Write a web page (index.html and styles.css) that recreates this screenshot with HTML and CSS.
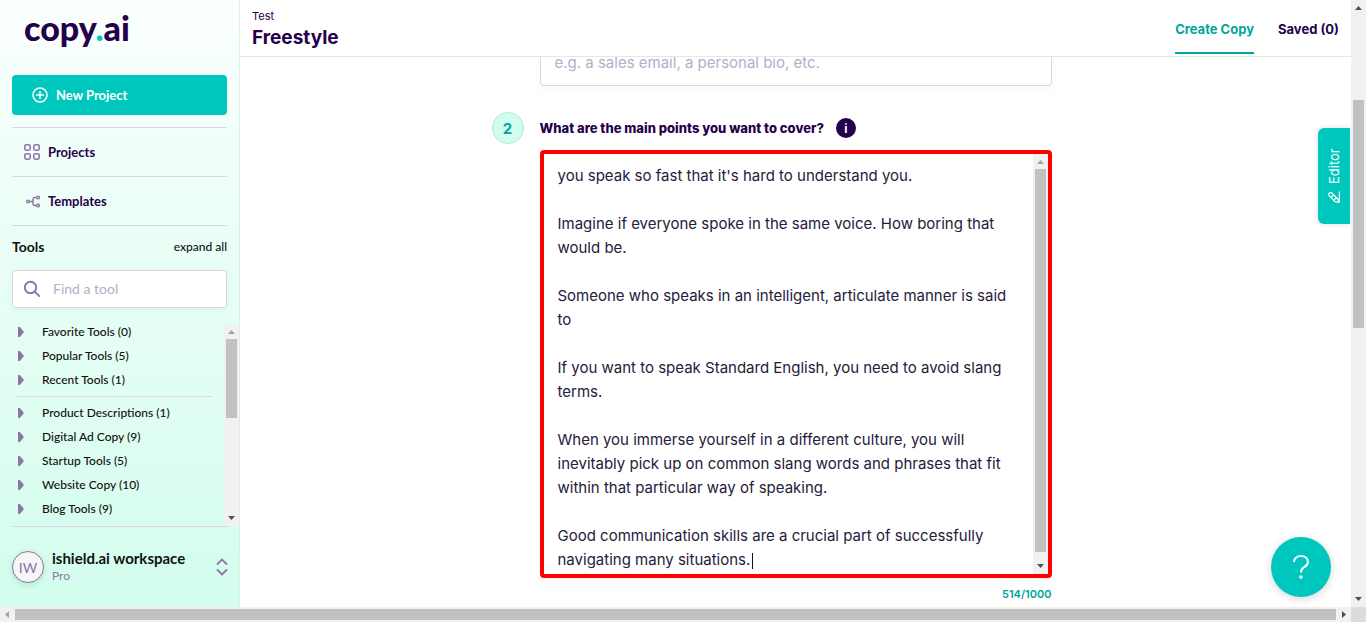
FILE: index.html
```html
<!DOCTYPE html>
<html lang="en">
<head>
<meta charset="utf-8">
<title>Freestyle – copy.ai</title>
<link rel="stylesheet" href="styles.css">
</head>
<body>
<div class="app">
  <aside class="sidebar">
    <a class="logo" href="#">copy<span class="logo-dot">.</span>ai</a>
    <button class="new-project" type="button">
      <svg width="16" height="16" viewBox="0 0 16 16" fill="none" stroke="currentColor" stroke-width="1.5" stroke-linecap="round"><circle cx="8" cy="8" r="7"/><path d="M8 4.6v6.8M4.6 8h6.8"/></svg>
      New Project
    </button>
    <nav class="nav">
      <a class="nav-link" href="#">
        <svg width="16" height="16" viewBox="0 0 16 16" fill="none" stroke="currentColor" stroke-width="1.6"><rect x=".8" y=".8" width="5.4" height="5.4" rx="1.6"/><rect x="9.8" y=".8" width="5.4" height="5.4" rx="1.6"/><rect x=".8" y="9.8" width="5.4" height="5.4" rx="1.6"/><rect x="9.8" y="9.8" width="5.4" height="5.4" rx="1.6"/></svg>
        Projects
      </a>
      <a class="nav-link" href="#">
        <svg width="16" height="16" viewBox="0 0 16 16" fill="none" stroke="currentColor" stroke-width="1.4"><circle cx="4" cy="8.5" r="1.4"/><circle cx="14" cy="4.5" r="1.4"/><circle cx="14" cy="12.5" r="1.4"/><path d="M5.4 8.5H9M12.6 4.5h-1.800A1.800 1.800 0 0 0 9 6.300v4.400a1.800 1.800 0 0 0 1.800 1.800h1.800"/></svg>
        Templates
      </a>
    </nav>
    <div class="tools-head">
      <h2 class="tools-title">Tools</h2>
      <button class="expand" type="button">expand all</button>
    </div>
    <label class="search">
      <svg width="18" height="18" viewBox="0 0 18 18" fill="none" stroke="currentColor" stroke-width="1.900"><circle cx="7.500" cy="7.500" r="5.700"/><path d="M11.700 11.700l5 5"/></svg>
      <input class="search-input" type="text" placeholder="Find a tool" aria-label="Find a tool">
    </label>
    <div class="tools">
      <div class="tool-list">
        <button class="tool" type="button"><i class="caret"></i>Favorite Tools (0)</button>
        <button class="tool" type="button"><i class="caret"></i>Popular Tools (5)</button>
        <button class="tool" type="button"><i class="caret"></i>Recent Tools (1)</button>
        <hr class="tool-rule">
        <button class="tool" type="button"><i class="caret"></i>Product Descriptions (1)</button>
        <button class="tool" type="button"><i class="caret"></i>Digital Ad Copy (9)</button>
        <button class="tool" type="button"><i class="caret"></i>Startup Tools (5)</button>
        <button class="tool" type="button"><i class="caret"></i>Website Copy (10)</button>
        <button class="tool" type="button"><i class="caret"></i>Blog Tools (9)</button>
      </div>
      <div class="bar">
        <svg class="arrow dim" viewBox="0 0 15 15"><path d="M4 10h7L7.500 6z"/></svg>
        <div class="track tools-track"><div class="thumb"></div></div>
        <svg class="arrow" viewBox="0 0 15 15"><path d="M4 5h7L7.500 9z"/></svg>
      </div>
    </div>
    <button class="workspace" type="button">
      <span class="avatar">IW</span>
      <span class="workspace-text"><b class="workspace-name">ishield.ai workspace</b><span class="plan">Pro</span></span>
      <svg width="12" height="18" viewBox="0 0 12 18" fill="none" stroke="currentColor" stroke-width="1.800"><path d="M1 6.500l5-5 5 5M1 11.500l5 5 5-5"/></svg>
    </button>
  </aside>

  <main class="main">
    <header class="header">
      <div>
        <div class="project">Test</div>
        <h1 class="title">Freestyle</h1>
      </div>
      <nav class="tabs">
        <a class="tab active" href="#">Create Copy</a>
        <a class="tab" href="#">Saved (0)</a>
      </nav>
    </header>
    <div class="content">
      <form class="form">
        <input class="topic" type="text" placeholder="e.g. a sales email, a personal bio, etc." aria-label="What are you looking to create?">
        <span class="step">2</span>
        <div class="question">
          <label for="points">What are the main points you want to cover?</label>
          <span class="info">i</span>
        </div>
        <div class="points-box">
          <textarea class="points" id="points">you speak so fast that it's hard to understand you.

Imagine if everyone spoke in the same voice. How boring that would be.

Someone who speaks in an intelligent, articulate manner is said to

If you want to speak Standard English, you need to avoid slang terms.

When you immerse yourself in a different culture, you will inevitably pick up on common slang words and phrases that fit within that particular way of speaking.

Good communication skills are a crucial part of successfully navigating many situations.</textarea>
          <div class="bar">
            <svg class="arrow dim" viewBox="0 0 15 15"><path d="M4 10h7L7.500 6z"/></svg>
            <div class="track points-track"><div class="thumb"></div></div>
            <svg class="arrow" viewBox="0 0 15 15"><path d="M4 5h7L7.500 9z"/></svg>
          </div>
          <i class="text-cursor"></i>
        </div>
        <div class="counter">514/1000</div>
      </form>
    </div>
    <button class="editor" type="button">
      <svg width="12" height="12" viewBox="0 0 12 12" fill="none" stroke="currentColor" stroke-width="1.200"><path d="M1.200 7.200L7.200 1.300a1.900 1.900 0 0 1 2.700 2.700L4 9.900l-3.400.7zM2.800 5.700l2.700 2.700M5.500 3l2.700 2.700M1 11.400h10.500"/></svg>
      Editor
    </button>
    <button class="help" type="button" aria-label="Help">
      <svg width="20" height="28" viewBox="0 0 20 28" fill="none" stroke="currentColor" stroke-width="2"><path d="M3 9C3 5.400 5.800 3 9.900 3s7 2.300 7 5.900c0 3-1.900 4.200-4 5.500-2 1.300-2.900 2.400-2.900 5.200"/><circle cx="9.900" cy="24" r="1.800" fill="currentColor" stroke="none"/></svg>
    </button>
  </main>

  <div class="bar page-bar">
    <svg class="arrow" viewBox="0 0 15 15"><path d="M4 10h7L7.500 6z"/></svg>
    <div class="track page-track"><div class="thumb"></div></div>
    <svg class="arrow" viewBox="0 0 15 15"><path d="M4 5h7L7.500 9z"/></svg>
  </div>
  <div class="bar across">
    <svg class="arrow dim" viewBox="0 0 15 15"><path d="M9 4v7L5 7.500z"/></svg>
    <div class="track"><div class="thumb"></div></div>
    <svg class="arrow" viewBox="0 0 15 15"><path d="M6 4v7l4-3.500z"/></svg>
  </div>
  <div class="corner"></div>
</div>
</body>
</html>
```
FILE: styles.css
```css
:root {
  --teal: #00c7be;
  --teal-dark: #00a69c;
  --ink: #25004b;
  --mauve: #8d74a5;
  --line: #dfd3e9;
}
* { box-sizing: border-box; }
body { margin: 0; font-family: Inter, sans-serif; color: var(--ink); background: #fff; }
button { border: 0; padding: 0; background: none; color: inherit; font: inherit; text-align: left; cursor: pointer; }
a { color: inherit; text-decoration: none; }
h1, h2 { margin: 0; }
svg { flex: none; }

.app {
  display: grid;
  grid-template: minmax(0, 1fr) 15px / 240px minmax(0, 1fr) 15px;
  height: 100vh;
  overflow: hidden;
}

/* Sidebar */
.sidebar {
  display: flex;
  flex-direction: column;
  min-height: 0;
  padding-left: 12px;
  border-right: 1px solid #d8f0e8;
  background: linear-gradient(#fbfffd, #d2fdec);
  font-family: Lato, sans-serif;
}
.logo {
  height: 75px;
  padding: 7px 0 0 12px;
  font-size: 34px;
  line-height: 42px;
  font-weight: 900;
}
.logo-dot { color: var(--teal); }
.new-project {
  display: flex;
  align-items: center;
  gap: 8px;
  height: 40px;
  margin: 0 12px 12px 0;
  padding-left: 20px;
  border-radius: 4px;
  background: var(--teal);
  color: #fff;
  font-size: 13px;
  font-weight: 700;
  flex: none;
}
.nav { margin-right: 12px; }
.nav-link {
  display: flex;
  align-items: center;
  gap: 8px;
  height: 49px;
  padding-left: 12px;
  border-top: 1px solid var(--line);
  font-size: 13px;
  font-weight: 700;
}
.nav-link svg { color: var(--mauve); }
.tools-head {
  display: flex;
  align-items: center;
  justify-content: space-between;
  height: 45px;
  margin-right: 12px;
  padding-bottom: 3px;
  border-top: 1px solid var(--line);
  color: #111;
  flex: none;
}
.tools-title { font-size: 14px; font-weight: 700; }
.expand { font-size: 12px; font-weight: 500; }
.search {
  display: flex;
  align-items: center;
  gap: 10px;
  height: 38px;
  margin: 0 12px 16px 0;
  padding: 0 10px;
  border: 1px solid var(--line);
  border-radius: 4px;
  background: #fff;
  color: var(--mauve);
  box-shadow: 0 2px 6px rgb(0 80 70 / 6%);
  flex: none;
}
.search-input { flex: 1; min-width: 0; padding: 0 2px 2px; border: 0; outline: 0; background: none; font: 14px Lato, sans-serif; }
::placeholder { color: #b9abc8; opacity: 1; }

.tools { display: flex; flex: 1; min-height: 0; }
.tool-list { display: flex; flex-direction: column; gap: 8px; flex: 1; overflow: hidden; }
.tool {
  display: flex;
  align-items: center;
  gap: 18px;
  padding-left: 6px;
  color: #111;
  font-size: 12px;
  line-height: 16px;
  font-weight: 500;
  flex: none;
}
.caret { width: 6px; height: 10px; background: var(--mauve); clip-path: polygon(0 0, 30% 0, 100% 50%, 30% 100%, 0 100%); }
.tool-rule { width: auto; height: 1px; margin: 0 12px 0 4px; border: 0; background: var(--line); flex: none; }

.workspace {
  display: flex;
  align-items: center;
  gap: 8px;
  height: 81px;
  margin-right: 11px;
  border-top: 1px solid var(--line);
  color: var(--mauve);
  flex: none;
}
.avatar {
  display: grid;
  place-items: center;
  width: 32px;
  height: 32px;
  border: 1px solid var(--mauve);
  border-radius: 50%;
  background: #f6f6f6;
  font-size: 14px;
  box-shadow: 0 2px 6px rgb(0 80 70 / 15%);
}
.workspace-text { display: grid; flex: 1; }
.workspace-name { color: #111; font-size: 15px; line-height: 18px; font-weight: 700; }
.plan { font-size: 12px; line-height: 18px; }

/* Main */
.main { position: relative; display: flex; flex-direction: column; min-height: 0; overflow: hidden; }
.header {
  display: flex;
  justify-content: space-between;
  height: 57px;
  padding: 8px 12px 0;
  border-bottom: 1px solid #d5f0e0;
  flex: none;
}
.project { font-size: 11px; line-height: 16px; }
.title { font-size: 19px; line-height: 27px; font-weight: 700; }
.tabs { display: flex; gap: 24px; }
.tab { height: 46px; font-size: 13px; line-height: 43px; font-weight: 700; }
.tab.active { border-bottom: 2px solid var(--teal-dark); color: var(--teal-dark); }

.content { flex: 1; min-height: 0; overflow: hidden; }
.form {
  display: grid;
  grid-template-columns: 48px minmax(0, 512px) 48px;
  justify-content: center;
  margin-top: -19px;
}
.topic, .points-box, .counter { grid-column: 2; }
.topic {
  height: 48px;
  padding: 0 14px;
  border: 1px solid var(--line);
  border-radius: 4px;
  font: 15px Inter, sans-serif;
  box-shadow: 0 4px 8px rgb(0 80 70 / 4%);
}
.step {
  grid-column: 1;
  display: grid;
  place-items: center;
  width: 32px;
  height: 32px;
  margin: 26px 0 6px;
  border: 1px solid #a9ebe0;
  border-radius: 50%;
  background: #d2fdec;
  color: var(--teal-dark);
  font-size: 15px;
  font-weight: 700;
}
.question { display: flex; align-items: center; gap: 12px; margin: 26px 0 6px; font-size: 13px; font-weight: 800; }
.info {
  display: grid;
  place-items: center;
  width: 20px;
  height: 20px;
  border-radius: 50%;
  background: var(--ink);
  color: #fff;
  font-size: 12px;
  font-weight: 700;
}
.points-box {
  position: relative;
  display: flex;
  height: 428px;
  border: 4px solid #f00;
  border-radius: 4px;
  box-shadow: 0 4px 8px rgb(0 80 70 / 4%);
}
.points {
  flex: 1;
  min-width: 0;
  padding: 10px 14px 0;
  border: 0;
  outline: 0;
  resize: none;
  overflow: hidden;
  color: #25203a;
  font: 15px/24px Inter, sans-serif;
}
.text-cursor { position: absolute; left: 208px; bottom: 5px; width: 1px; height: 16px; background: #111; }
.counter { padding-top: 8px; text-align: right; color: var(--teal-dark); font-size: 11px; line-height: 16px; font-weight: 600; }

.editor {
  position: absolute;
  right: 1px;
  top: 128px;
  display: flex;
  align-items: center;
  justify-content: center;
  gap: 7px;
  width: 32px;
  height: 96px;
  border-radius: 0 6px 6px 0;
  background: var(--teal);
  color: #fff;
  font-size: 13px;
  writing-mode: vertical-rl;
  transform: rotate(180deg);
  box-shadow: 0 0 6px rgb(0 0 0 / 12%);
}
.editor svg { transform: rotate(90deg); }
.help {
  position: absolute;
  right: 20px;
  bottom: 10px;
  display: grid;
  place-items: center;
  width: 60px;
  height: 60px;
  border-radius: 50%;
  background: var(--teal);
  color: #fff;
  box-shadow: 0 2px 8px rgb(0 0 0 / 16%);
}

/* Scrollbars */
.bar { display: flex; flex-direction: column; width: 15px; background: #f1f1f1; flex: none; }
.arrow { width: 15px; height: 15px; fill: #505050; }
.arrow.dim { fill: #a3a3a3; }
.track { display: flex; flex-direction: column; flex: 1; min-height: 0; padding: 0 2px; }
.thumb { flex: 1; background: #c1c1c1; }
.tools-track .thumb { flex: 0 0 46%; }
.points-track { padding-bottom: 7px; }
.page-track { padding-top: 85px; }
.page-track .thumb { flex: 0 0 228px; }
.across { grid-column: 1 / 3; flex-direction: row; width: auto; }
.across .track { flex-direction: row; padding: 2px 0; }
.corner { background: #dcdcdc; }
```
